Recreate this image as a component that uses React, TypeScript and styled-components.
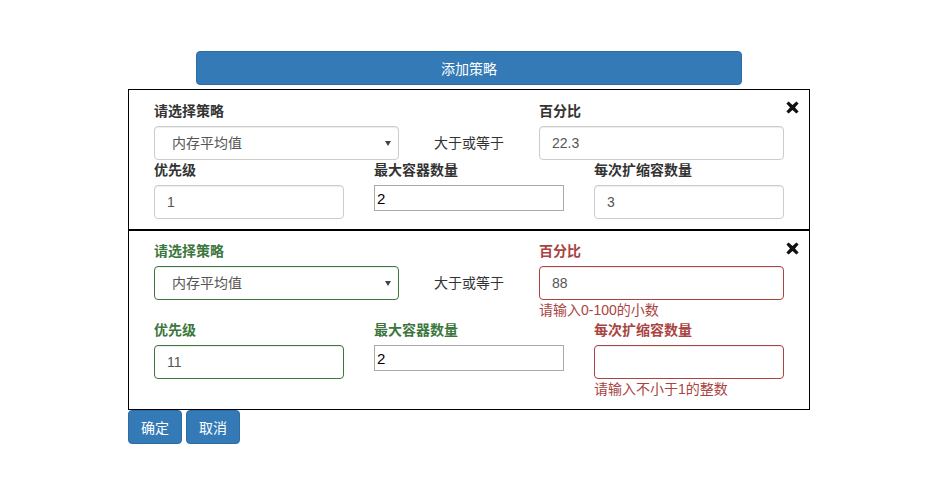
import React from "react";
import styled, { createGlobalStyle, css } from "styled-components";

type Status = "default" | "success" | "error";

const colors: Record<Status, string> = {
  default: "#333",
  success: "#3c763d",
  error: "#a94442",
};

const borders: Record<Status, string> = {
  default: "#ccc",
  success: "#3c763d",
  error: "#a94442",
};

const GlobalStyle = createGlobalStyle`
  * {
    box-sizing: border-box;
  }
  body {
    margin: 0;
    background: #fff;
    font-family: "Liberation Sans", "Noto Sans CJK SC", sans-serif;
    font-size: 14px;
    line-height: 20px;
    color: #333;
  }
`;

const Page = styled.div`
  display: flex;
  flex-direction: column;
  align-items: center;
  padding: 51px 0 0 11px;
`;

const Wrapper = styled.div`
  width: 682px;
  display: flex;
  flex-direction: column;
  align-items: center;
`;

const AddButton = styled.button`
  width: 546px;
  height: 34px;
  margin-bottom: 4px;
  background: #337ab7;
  border: 1px solid #2e6da4;
  border-radius: 4px;
  color: #fff;
  font-family: inherit;
  font-size: 14px;
  cursor: pointer;
`;

const StrategyBox = styled.div`
  position: relative;
  width: 100%;
  border: 1px solid #000;
  padding: 11px 25px 10px;

  & + & {
    padding-top: 10px;
  }
`;

const CloseButton = styled.span`
  position: absolute;
  top: 11px;
  right: 10px;
  width: 13px;
  height: 13px;
  display: flex;
  cursor: pointer;
`;

const TopRow = styled.div`
  display: grid;
  grid-template-columns: 245px 140px 245px;
`;

const BottomRow = styled.div`
  display: grid;
  grid-template-columns: repeat(3, 190px);
  column-gap: 30px;
`;

const Field = styled.div`
  display: flex;
  flex-direction: column;
`;

const Label = styled.label<{ $status: Status }>`
  display: block;
  height: 20px;
  margin-bottom: 5px;
  font-weight: 700;
  color: ${(p) => colors[p.$status]};
`;

const Between = styled.div`
  padding-top: 25px;
  height: 59px;
  display: flex;
  align-items: center;
  justify-content: center;
  color: #333;
`;

const controlStyle = css<{ $status: Status }>`
  display: block;
  width: 100%;
  height: 34px;
  padding: 6px 12px;
  font-family: inherit;
  font-size: 14px;
  line-height: 20px;
  color: #555;
  background: #fff;
  border: 1px solid ${(p) => borders[p.$status]};
  border-radius: 4px;
  box-shadow: inset 0 1px 1px rgba(0, 0, 0, 0.075);
  outline: none;
`;

const Input = styled.input<{ $status: Status }>`
  ${controlStyle}
`;

const SelectWrap = styled.div`
  position: relative;
`;

const Select = styled.select<{ $status: Status }>`
  ${controlStyle}
  appearance: none;
  padding-left: 17px;
`;

const Caret = styled.span`
  position: absolute;
  right: 8px;
  top: 15px;
  width: 0;
  height: 0;
  border-left: 3px solid transparent;
  border-right: 3px solid transparent;
  border-top: 5px solid #444;
  pointer-events: none;
`;

const PlainInput = styled.input`
  display: block;
  width: 100%;
  height: 26px;
  padding: 1px 2px;
  font-family: "Liberation Sans", sans-serif;
  font-size: 15px;
  color: #000;
  border: 1px solid #a9a9a9;
  outline: none;
`;

const HelpText = styled.span`
  display: block;
  height: 20px;
  color: #a94442;
`;

const Actions = styled.div`
  display: flex;
  gap: 4px;
  width: 100%;
`;

const ActionButton = styled.button`
  height: 34px;
  padding: 6px 12px;
  background: #337ab7;
  border: 1px solid #2e6da4;
  border-radius: 4px;
  color: #fff;
  font-family: inherit;
  font-size: 14px;
  cursor: pointer;
`;

const CloseIcon = () => (
  <svg width="13" height="13" viewBox="0 0 13 13">
    <path
      d="M2.6 0.4 L6.5 4 L10.4 0.4 L12.6 2.6 L9 6.5 L12.6 10.4 L10.4 12.6 L6.5 9 L2.6 12.6 L0.4 10.4 L4 6.5 L0.4 2.6 Z"
      fill="#111"
    />
  </svg>
);

interface StrategyData {
  strategy: Status;
  percent: { value: string; status: Status; error?: string };
  priority: { value: string; status: Status };
  maxStatus: Status;
  maxValue: string;
  step: { value: string; status: Status; error?: string };
}

const strategies: StrategyData[] = [
  {
    strategy: "default",
    percent: { value: "22.3", status: "default" },
    priority: { value: "1", status: "default" },
    maxStatus: "default",
    maxValue: "2",
    step: { value: "3", status: "default" },
  },
  {
    strategy: "success",
    percent: { value: "88", status: "error", error: "请输入0-100的小数" },
    priority: { value: "11", status: "success" },
    maxStatus: "success",
    maxValue: "2",
    step: { value: "", status: "error", error: "请输入不小于1的整数" },
  },
];

function StrategyItem({ data }: { data: StrategyData }) {
  return (
    <StrategyBox>
      <CloseButton>
        <CloseIcon />
      </CloseButton>
      <TopRow>
        <Field>
          <Label $status={data.strategy}>请选择策略</Label>
          <SelectWrap>
            <Select $status={data.strategy} defaultValue="mem">
              <option value="mem">内存平均值</option>
              <option value="cpu">CPU平均值</option>
            </Select>
            <Caret />
          </SelectWrap>
        </Field>
        <Between>大于或等于</Between>
        <Field>
          <Label $status={data.percent.status}>百分比</Label>
          <Input $status={data.percent.status} defaultValue={data.percent.value} />
          {data.percent.error && <HelpText>{data.percent.error}</HelpText>}
        </Field>
      </TopRow>
      <BottomRow>
        <Field>
          <Label $status={data.priority.status}>优先级</Label>
          <Input $status={data.priority.status} defaultValue={data.priority.value} />
        </Field>
        <Field>
          <Label $status={data.maxStatus}>最大容器数量</Label>
          <PlainInput defaultValue={data.maxValue} />
        </Field>
        <Field>
          <Label $status={data.step.status}>每次扩缩容数量</Label>
          <Input $status={data.step.status} defaultValue={data.step.value} />
          {data.step.error && <HelpText>{data.step.error}</HelpText>}
        </Field>
      </BottomRow>
    </StrategyBox>
  );
}

export default function App() {
  return (
    <>
      <GlobalStyle />
      <Page>
        <Wrapper>
          <AddButton>添加策略</AddButton>
          {strategies.map((s, i) => (
            <StrategyItem key={i} data={s} />
          ))}
          <Actions>
            <ActionButton>确定</ActionButton>
            <ActionButton>取消</ActionButton>
          </Actions>
        </Wrapper>
      </Page>
    </>
  );
}
